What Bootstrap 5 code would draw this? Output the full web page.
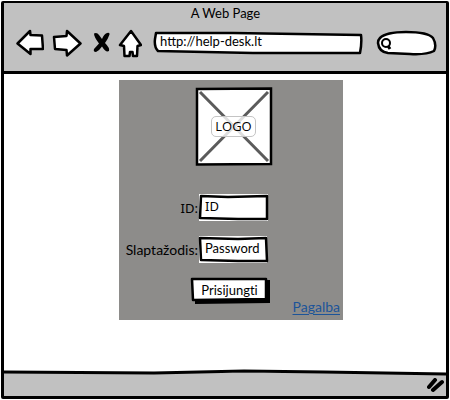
<!DOCTYPE html>
<html lang="lt">
<head>
<meta charset="utf-8">
<meta name="viewport" content="width=device-width, initial-scale=1">
<title>A Web Page</title>
<link href="https://cdn.jsdelivr.net/npm/bootstrap@5.3.0/dist/css/bootstrap.min.css" rel="stylesheet">
<style>
  body { font-family: Lato, "Open Sans", sans-serif; font-size: 13px; line-height: 16px; color: #000; background: #fff; }
  .browser { min-height: 100vh; padding: 1px; }
  .frame { border: 3px solid #000; border-top-width: 2px; border-radius: 2px; }
  .chrome { background: #c1c1c1; border-bottom: 3px solid #000; height: 71px; padding: 2px 9px 0 12px; }
  .page-title { padding-right: 2px; }
  .tools { height: 38px; margin-top: 3px; }
  .tool { background: none; border: 0; padding: 0; line-height: 0; }
  .sketch { display: grid; }
  .sketch > * { grid-area: 1 / 1; min-width: 0; }
  .sketch > svg { width: 100%; height: 100%; }
  .ink { fill: #fff; stroke: #000; stroke-width: 2.5; stroke-linejoin: round; stroke-linecap: round; }
  .bare { background: none; border: 0; outline-offset: -3px; padding: 0 7px 4px; width: 100%; color: #000; font: inherit; z-index: 1; }
  .bare::placeholder { color: #000; opacity: 1; }
  .address { height: 24px; margin: 0 13px 0 11px; }
  .address .bare { padding-bottom: 5px; }
  .finder { width: 61px; height: 27px; margin-top: 1px; }
  .finder .bare { padding-left: 20px; }
  main { padding-left: 12px; }
  .panel { background: #8d8c8a; width: 224px; margin-top: 6px; min-height: 240px; padding: 7px 3px 3px 0; }
  .fields { display: grid; grid-template-columns: 79px 71px; row-gap: 15px; align-items: center; }
  .fields label { font-size: 14px; white-space: nowrap; }
  .fields .serifed { font-family: "Noto Sans", "Open Sans", sans-serif; font-size: 13px; }
  .logo { grid-column: 2; justify-self: center; width: 78px; height: 79px; margin-bottom: 13px; place-items: center; }
  .logo-tag { background: rgba(255,255,255,.8); border: 1px solid #c4c4c4; border-radius: 5px; padding: 1px 3px 2px; font-family: "Open Sans", sans-serif; z-index: 1; }
  .field { height: 27px; }
  .submit { width: 80px; height: 27px; margin-top: 14px; background: none; border: 0; padding: 0; align-items: center; font-variant-ligatures: none; font-feature-settings: "liga" 0, "clig" 0, "dlig" 0; }
  .submit span { z-index: 1; padding-bottom: 2px; }
  .help { color: #1c5499; font-size: 14px; text-decoration: underline; text-underline-offset: 2px; margin-top: -5px; }
  .help:hover { color: #0b3870; }
  .status { background: linear-gradient(#c1c1c1, #c1c1c1) 0 4px / 100% 100% no-repeat; height: 27px; }
  .status > .edge { height: 27px; }
  .status > .grip { width: 17px; height: 15px; justify-self: end; align-self: center; margin: 6px 2px 0 0; }
</style>
</head>
<body>
<div class="browser d-flex flex-column">
<div class="frame d-flex flex-column flex-grow-1">
  <header class="chrome">
    <div class="page-title text-center">A Web Page</div>
    <div class="tools d-flex align-items-center">
      <button class="tool" type="button" aria-label="Back"><svg width="28" height="28" viewBox="0 0 28 28"><path class="ink" d="M1.500 14.500L14 2L14.500 6L26 6.500L27 20L14.500 20L14.500 25Z"/></svg></button>
      <button class="tool ms-2" type="button" aria-label="Forward"><svg width="30" height="28" viewBox="0 0 30 28"><path class="ink" d="M2 8L14.500 7L15 2L28.500 14.500L15 26.500L14.500 21L3 20Z"/></svg></button>
      <button class="tool ms-2" type="button" aria-label="Stop"><svg width="24" height="28" viewBox="0 0 24 28"><path d="M4 4.500Q7 3 9 6L12 10Q14 5 17 4Q20 3 19.500 5.500Q18 10 15 14Q20 19 19 22Q16 24 12 17.500Q9 22 6 23Q3 23 4 20L9 14.500Q4 8 4 4.500Z"/></svg></button>
      <button class="tool ms-1" type="button" aria-label="Home"><svg width="24" height="29" viewBox="0 0 24 29"><path class="ink" d="M13 2L23 16L19.500 17L19 27L15 27L14.500 23L12 23L11.500 27L6.500 27L6 17L2 16Z"/></svg></button>
      <div class="sketch address flex-grow-1">
        <svg viewBox="0 0 210 24" preserveAspectRatio="none" aria-hidden="true"><path class="ink" d="M3 2L80 2L208 4Q209 12 207 22L100 22L5 20Q1 16 2 8Z"/></svg>
        <input class="bare" type="text" aria-label="Address" value="http://help-desk.lt">
      </div>
      <div class="sketch finder">
        <svg viewBox="0 0 61 27" aria-hidden="true"><path class="ink" d="M4 8Q10 2 30 2Q52 2 57 8Q61 15 58 21Q50 25 34 24L12 23Q3 22 2 13Q2 10 4 8Z"/><circle cx="10" cy="13" r="4" fill="none" stroke="#000" stroke-width="2"/><path d="M12 16L14 19" stroke="#000" stroke-width="3"/></svg>
        <input class="bare" type="search" aria-label="Search">
      </div>
    </div>
  </header>
  <main class="flex-grow-1">
    <form class="panel mx-auto d-flex flex-column">
      <div class="fields">
        <div class="sketch logo">
          <svg viewBox="0 0 78 79" aria-hidden="true"><path fill="#fff" stroke="#000" stroke-width="2.500" d="M2 2L76 1.500L76 77L2 77.500Z"/><path d="M5 5L73 74M73 5L5 74" stroke="#5b5b5b" stroke-width="3"/></svg>
          <span class="logo-tag">LOGO</span>
        </div>
        <label class="text-end serifed" for="uid">ID:</label>
        <div class="sketch field">
          <svg viewBox="0 0 71 27" preserveAspectRatio="none" aria-hidden="true"><path fill="#fff" d="M1 0H70V27H1Z"/><path class="ink" d="M3 2L30 3L69 2L69 25L40 25L2 24Z"/></svg>
          <input class="bare serifed" id="uid" type="text" placeholder="ID">
        </div>
        <label class="text-end" for="pwd">Slaptažodis:</label>
        <div class="sketch field">
          <svg viewBox="0 0 71 27" preserveAspectRatio="none" aria-hidden="true"><path fill="#fff" d="M1 0H69V27H1Z"/><path class="ink" d="M2 2L40 3L68 2L69 25L40 25L3 24Z"/></svg>
          <input class="bare" id="pwd" type="password" placeholder="Password">
        </div>
      </div>
      <button class="sketch submit mx-auto" type="button">
        <svg viewBox="0 0 80 27" aria-hidden="true"><path d="M5 4L80 3L80 26L5 27Z"/><path class="ink" d="M2 2L76 2L76 22L3 23Z"/></svg>
        <span>Prisijungti</span>
      </button>
      <a class="help align-self-end" href="#">Pagalba</a>
    </form>
  </main>
  <footer class="status sketch">
    <svg class="edge" viewBox="0 0 442 27" preserveAspectRatio="none" aria-hidden="true"><path fill="none" stroke="#000" stroke-width="3" d="M0 3L150 4L240 2L320 3L442 5"/></svg>
    <svg class="grip" viewBox="0 0 17 15" aria-hidden="true"><path d="M2 9L8 2M6 12L15 4" stroke="#000" stroke-width="4" stroke-linecap="round"/></svg>
  </footer>
</div>
</div>
<script src="https://cdn.jsdelivr.net/npm/bootstrap@5.3.0/dist/js/bootstrap.bundle.min.js"></script>
</body>
</html>
